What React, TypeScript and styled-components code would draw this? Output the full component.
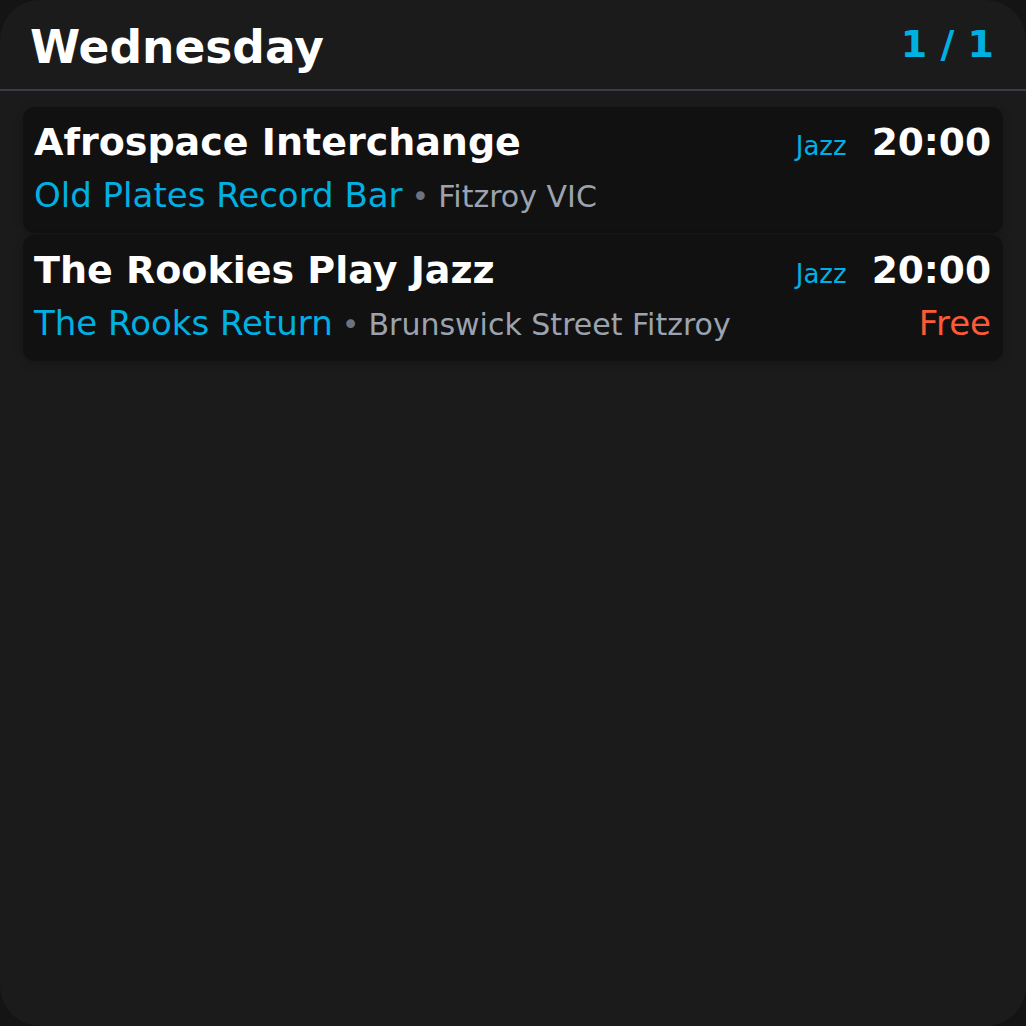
import styled, { createGlobalStyle } from "styled-components";

const GlobalStyle = createGlobalStyle`
  html, body {
    margin: 0;
    padding: 0;
    background: #141414;
  }
  * {
    box-sizing: border-box;
  }
`;

const Panel = styled.div`
  width: 1026px;
  height: 1026px;
  background: #1b1b1b;
  border-radius: 40px;
  overflow: hidden;
  font-family: "DejaVu Sans", Verdana, sans-serif;
  display: flex;
  flex-direction: column;
`;

const Header = styled.header`
  display: flex;
  align-items: flex-start;
  justify-content: space-between;
  height: 91px;
  padding: 21px 32px 0 30px;
  border-bottom: 2px solid #383d48;
`;

const Day = styled.h1`
  margin: 0;
  font-size: 45.5px;
  font-weight: 700;
  line-height: normal;
  color: #ffffff;
`;

const Pager = styled.div`
  margin-top: 1px;
  font-size: 38px;
  font-weight: 700;
  color: #00b0e2;
`;

const List = styled.div`
  display: flex;
  flex-direction: column;
  gap: 2px;
  padding: 16px 23px;
`;

const Card = styled.div`
  background: #111111;
  border-radius: 12px;
  box-shadow: 0 2px 10px rgba(0, 0, 0, 0.22);
  padding: 13px 12px 0 11px;
  height: 126px;
  display: flex;
  flex-direction: column;
`;

const Row = styled.div`
  display: flex;
  align-items: baseline;
  justify-content: space-between;
`;

const Title = styled.div`
  font-size: 38px;
  font-weight: 700;
  color: #ffffff;
`;

const Meta = styled.div`
  display: flex;
  align-items: baseline;
  gap: 25px;
`;

const Genre = styled.span`
  font-size: 26px;
  color: #00b0e2;
`;

const Time = styled.span`
  font-size: 37.5px;
  font-weight: 700;
  color: #ffffff;
`;

const Venue = styled.div`
  font-size: 34px;
  color: #00b0e2;
  margin-top: 11px;
`;

const Place = styled.span`
  font-size: 30px;
  color: #9ca3af;
`;

const Dot = styled.span`
  font-size: 30px;
  color: #6b7280;
  margin: 0 9px;
`;

const Price = styled.span`
  font-size: 34px;
  color: #ff5a36;
`;

type Gig = {
  title: string;
  venue: string;
  place: string;
  genre: string;
  time: string;
  price?: string;
};

const gigs: Gig[] = [
  { title: "Afrospace Interchange", venue: "Old Plates Record Bar", place: "Fitzroy VIC", genre: "Jazz", time: "20:00" },
  { title: "The Rookies Play Jazz", venue: "The Rooks Return", place: "Brunswick Street Fitzroy", genre: "Jazz", time: "20:00", price: "Free" },
];

export default function App() {
  return (
    <>
      <GlobalStyle />
      <Panel>
        <Header>
          <Day>Wednesday</Day>
          <Pager>1 / 1</Pager>
        </Header>
        <List>
          {gigs.map((g) => (
            <Card key={g.title}>
              <Row>
                <Title>{g.title}</Title>
                <Meta>
                  <Genre>{g.genre}</Genre>
                  <Time>{g.time}</Time>
                </Meta>
              </Row>
              <Row>
                <Venue>
                  {g.venue}
                  <Dot>•</Dot>
                  <Place>{g.place}</Place>
                </Venue>
                {g.price && <Price>{g.price}</Price>}
              </Row>
            </Card>
          ))}
        </List>
      </Panel>
    </>
  );
}
